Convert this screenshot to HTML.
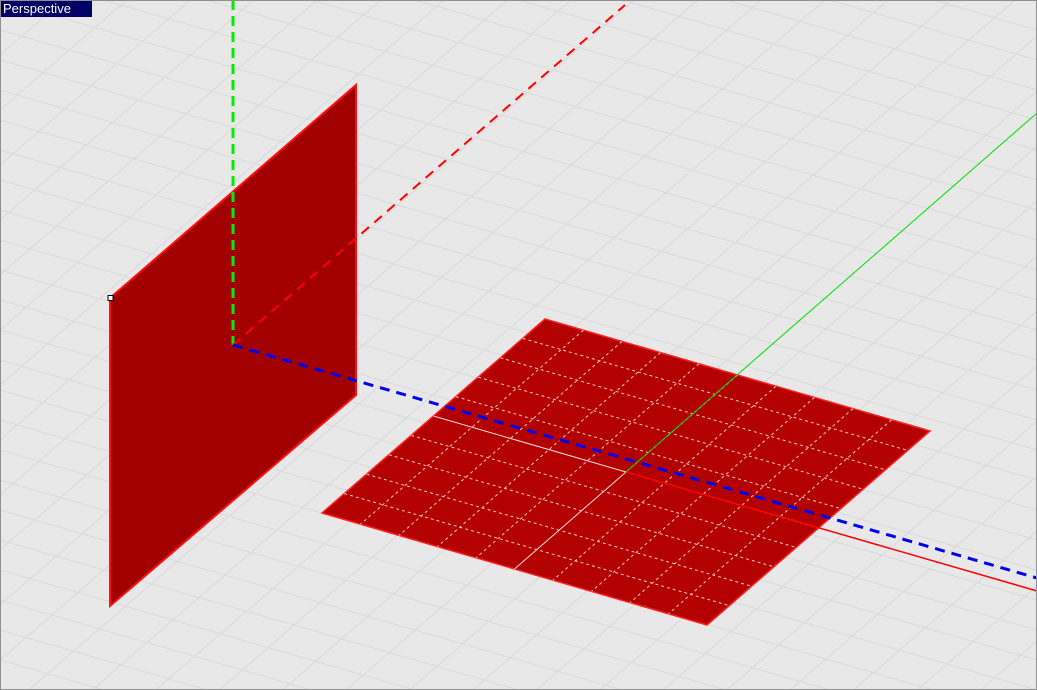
<!DOCTYPE html><html><head><style>
html,body{margin:0;padding:0;width:1037px;height:690px;overflow:hidden;background:#e8e8e8}
svg{display:block}
#lab{position:absolute;left:1px;top:1px;width:91px;height:16px;background:#000066;color:#fff;font:13px "Liberation Sans",sans-serif;line-height:16px;padding-left:2px;box-sizing:border-box}
</style></head><body>
<svg width="1037" height="690" style="position:absolute;left:0;top:0">
<rect width="1037" height="690" fill="#e8e8e8"/>
<g stroke="#d9d9d9" stroke-width="1">
<line x1="0" y1="-300" x2="1037" y2="0"/><line x1="0" y1="-270" x2="1037" y2="30"/><line x1="0" y1="-240" x2="1037" y2="60"/><line x1="0" y1="-210" x2="1037" y2="90"/><line x1="0" y1="-180" x2="1037" y2="120"/><line x1="0" y1="-150" x2="1037" y2="150"/><line x1="0" y1="-120" x2="1037" y2="180"/><line x1="0" y1="-90" x2="1037" y2="210"/><line x1="0" y1="-60" x2="1037" y2="240"/><line x1="0" y1="-30" x2="1037" y2="270"/><line x1="0" y1="0" x2="1037" y2="300"/><line x1="0" y1="30" x2="1037" y2="330"/><line x1="0" y1="60" x2="1037" y2="360"/><line x1="0" y1="90" x2="1037" y2="390"/><line x1="0" y1="120" x2="1037" y2="420"/><line x1="0" y1="150" x2="1037" y2="450"/><line x1="0" y1="180" x2="1037" y2="480"/><line x1="0" y1="210" x2="1037" y2="510"/><line x1="0" y1="240" x2="1037" y2="540"/><line x1="0" y1="270" x2="1037" y2="570"/><line x1="0" y1="300" x2="1037" y2="600"/><line x1="0" y1="330" x2="1037" y2="630"/><line x1="0" y1="360" x2="1037" y2="660"/><line x1="0" y1="390" x2="1037" y2="690"/><line x1="0" y1="420" x2="1037" y2="720"/><line x1="0" y1="450" x2="1037" y2="750"/><line x1="0" y1="480" x2="1037" y2="780"/><line x1="0" y1="510" x2="1037" y2="810"/><line x1="0" y1="540" x2="1037" y2="840"/><line x1="0" y1="570" x2="1037" y2="870"/><line x1="0" y1="600" x2="1037" y2="900"/><line x1="0" y1="630" x2="1037" y2="930"/><line x1="0" y1="660" x2="1037" y2="960"/>
<line x1="0" y1="0" x2="1037" y2="-899"/><line x1="0" y1="55" x2="1037" y2="-844"/><line x1="0" y1="110" x2="1037" y2="-789"/><line x1="0" y1="165" x2="1037" y2="-734"/><line x1="0" y1="220" x2="1037" y2="-679"/><line x1="0" y1="275" x2="1037" y2="-624"/><line x1="0" y1="330" x2="1037" y2="-569"/><line x1="0" y1="385" x2="1037" y2="-514"/><line x1="0" y1="440" x2="1037" y2="-459"/><line x1="0" y1="495" x2="1037" y2="-404"/><line x1="0" y1="550" x2="1037" y2="-349"/><line x1="0" y1="605" x2="1037" y2="-294"/><line x1="0" y1="660" x2="1037" y2="-239"/><line x1="0" y1="715" x2="1037" y2="-184"/><line x1="0" y1="770" x2="1037" y2="-129"/><line x1="0" y1="825" x2="1037" y2="-74"/><line x1="0" y1="880" x2="1037" y2="-19"/><line x1="0" y1="935" x2="1037" y2="36"/><line x1="0" y1="990" x2="1037" y2="91"/><line x1="0" y1="1045" x2="1037" y2="146"/><line x1="0" y1="1100" x2="1037" y2="201"/><line x1="0" y1="1155" x2="1037" y2="256"/><line x1="0" y1="1210" x2="1037" y2="311"/><line x1="0" y1="1265" x2="1037" y2="366"/><line x1="0" y1="1320" x2="1037" y2="421"/><line x1="0" y1="1375" x2="1037" y2="476"/><line x1="0" y1="1430" x2="1037" y2="531"/><line x1="0" y1="1485" x2="1037" y2="586"/><line x1="0" y1="1540" x2="1037" y2="641"/><line x1="0" y1="1595" x2="1037" y2="696"/>
</g>
<polygon points="110,298 356,85 356,395 110,606" fill="#a20000" stroke="#ff1010" stroke-width="2"/>
<polygon points="545,319 930,431 707,625 322,513" fill="#b30000" stroke="#ff2020" stroke-width="1.5"/>
<g stroke="#f2c8c8" stroke-width="1" stroke-dasharray="3,3">
<line x1="344.3" y1="493.6" x2="729.3" y2="605.6"/><line x1="366.6" y1="474.2" x2="751.6" y2="586.2"/><line x1="388.9" y1="454.8" x2="773.9" y2="566.8"/><line x1="411.2" y1="435.4" x2="796.2" y2="547.4"/><line x1="626" y1="472" x2="818.5" y2="528"/><line x1="455.8" y1="396.6" x2="840.8" y2="508.6"/><line x1="478.1" y1="377.2" x2="863.1" y2="489.2"/><line x1="500.4" y1="357.8" x2="885.4" y2="469.8"/><line x1="522.7" y1="338.4" x2="907.7" y2="450.4"/>
<line x1="583.5" y1="330.2" x2="360.5" y2="524.2"/><line x1="622" y1="341.4" x2="399" y2="535.4"/><line x1="660.5" y1="352.6" x2="437.5" y2="546.6"/><line x1="699" y1="363.8" x2="476" y2="557.8"/><line x1="737.5" y1="375" x2="626" y2="472"/><line x1="776" y1="386.2" x2="553" y2="580.2"/><line x1="814.5" y1="397.4" x2="591.5" y2="591.4"/><line x1="853" y1="408.6" x2="630" y2="602.6"/><line x1="891.5" y1="419.8" x2="668.5" y2="613.8"/>
</g>
<g stroke="#f4dcdc" stroke-width="1">
<line x1="433.5" y1="416" x2="626" y2="472"/><line x1="626" y1="472" x2="514.5" y2="569"/>
</g>
<line x1="626" y1="472" x2="1037" y2="591" stroke="#ff0000" stroke-width="1.5"/>
<line x1="626" y1="472" x2="1037" y2="113" stroke="#00e000" stroke-width="1"/>
<line x1="233" y1="0" x2="233" y2="345" stroke="#00ee00" stroke-width="3" stroke-dasharray="10,6"/>
<line x1="233" y1="345" x2="625" y2="5" stroke="#ff0000" stroke-width="2" stroke-dasharray="10,7"/>
<line x1="233" y1="345" x2="1037" y2="578" stroke="#0000ee" stroke-width="3" stroke-dasharray="10,7"/>
<rect x="108" y="295.5" width="5" height="5" fill="#fff" stroke="#000" stroke-width="1"/>
<rect x="0.5" y="0.5" width="1036" height="689" fill="none" stroke="#909090"/>
</svg>
<div id="lab">Perspective</div>
</body></html>
